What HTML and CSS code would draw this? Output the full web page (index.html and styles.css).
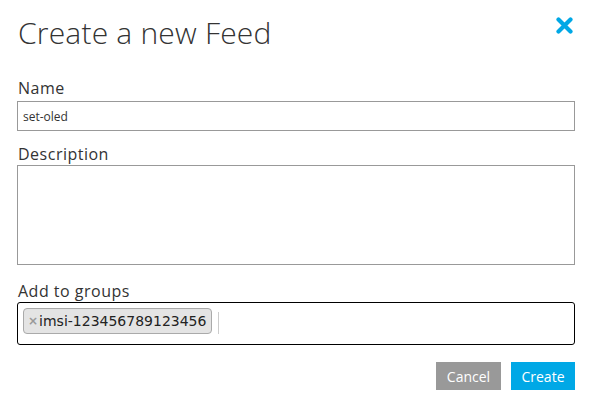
FILE: index.html
```html
<!DOCTYPE html>
<html>
<head>
<meta charset="utf-8">
<link rel="stylesheet" href="styles.css">
</head>
<body>
<div class="dialog">
  <div class="header">
    <h1 class="title">Create a new Feed</h1>
    <button class="close" aria-label="Close">
      <svg width="17" height="17" viewBox="0 0 17 17"><path d="M2.5 2.5 L14.5 14.5 M14.5 2.5 L2.5 14.5" stroke="#00a8e6" stroke-width="4.2" stroke-linecap="round"/></svg>
    </button>
  </div>
  <div class="field field-name">
    <label class="label">Name</label>
    <input class="input" type="text" value="set-oled">
  </div>
  <div class="field field-desc">
    <label class="label">Description</label>
    <textarea class="textarea"></textarea>
  </div>
  <div class="field field-groups">
    <label class="label">Add to groups</label>
    <div class="tagbox">
      <span class="tag"><span class="tag-x">×</span>imsi-123456789123456</span>
      <span class="caret"></span>
    </div>
  </div>
  <div class="footer">
    <button class="btn btn-cancel">Cancel</button>
    <button class="btn btn-create">Create</button>
  </div>
</div>
</body>
</html>
```
FILE: styles.css
```css
html, body { margin: 0; padding: 0; background: #fff; }
body { font-family: "Open Sans", "Lato", sans-serif; color: #333; }
.dialog { padding: 0 15px 0 17px; width: 558px; }
.header { display: flex; justify-content: space-between; align-items: flex-start; padding-top: 15px; }
.title { margin: 0 0 0 1px; font-weight: 300; font-size: 30px; line-height: 36px; color: #333; letter-spacing: 0.2px; }
.close { border: 0; background: none; padding: 0; margin: 2px 2px 0 0; width: 17px; height: 17px; display: block; }
.close svg { display: block; }
.field { display: flex; flex-direction: column; }
.label { display: block; font-size: 16px; line-height: 20px; color: #333; margin-left: 1px; letter-spacing: 0.5px; }
.field-name { margin-top: 27px; }
.field-name .label { margin-bottom: 3px; }
.field-desc { margin-top: 13px; }
.field-desc .label { margin-bottom: 1px; }
.field-groups { margin-top: 16px; }
.field-groups .label { margin-bottom: 1px; }
.input { box-sizing: border-box; width: 100%; height: 30px; border: 1px solid #999; border-radius: 0; padding: 0 5px; font-family: "Open Sans", sans-serif; font-size: 12px; color: #333; margin: 0; outline: none; }
.textarea { box-sizing: border-box; width: 100%; height: 100px; border: 1px solid #999; border-radius: 0; margin: 0; resize: none; display: block; outline: none; }
.tagbox { box-sizing: border-box; height: 43px; border: 1px solid #000; border-radius: 3px; padding: 5px 5px; display: flex; align-items: flex-start; gap: 6px; }
.tag { box-sizing: border-box; height: 26px; display: flex; align-items: center; background: #e4e4e4; border: 1px solid #aaa; border-radius: 4px; padding: 0 5px 0 4px; font-family: "DejaVu Sans", Verdana, sans-serif; font-size: 14px; color: #222; }
.tag-x { color: #999; font-size: 12px; margin-right: 1px; font-weight: bold; }
.caret { width: 1px; height: 22px; background: #ccc; margin-top: 4px; }
.footer { display: flex; justify-content: flex-end; gap: 10px; margin-top: 17px; }
.btn { border: 0; height: 28px; padding: 0; font-family: "Open Sans", sans-serif; font-size: 14px; color: #fff; border-radius: 0; }
.btn-cancel { background: #999; width: 65px; }
.btn-create { background: #00a8e6; width: 64px; }
```
